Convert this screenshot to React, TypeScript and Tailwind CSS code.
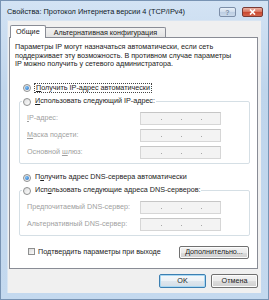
import React from "react";

function Radio({ checked }: { checked?: boolean }) {
  return (
    <span className="w-[8px] h-[8px] shrink-0 rounded-full border border-[#8e8f8f] bg-[linear-gradient(135deg,#dcdcdc,#ffffff)] flex items-center justify-center">
      {checked && <span className="w-[4px] h-[4px] rounded-full bg-[radial-gradient(circle_at_35%_35%,#7ec3f5,#1f66c2)]" />}
    </span>
  );
}

function IpBox() {
  return (
    <div className="w-[81px] h-[13px] border border-[#d6d6d6] border-t-[#c6c6c6] bg-[#f3f3f3] flex items-center pl-[20px] gap-[19px]">
      <span className="w-[1px] h-[1px] mt-[3px] bg-[#a8a8a8]" />
      <span className="w-[1px] h-[1px] mt-[3px] bg-[#a8a8a8]" />
      <span className="w-[1px] h-[1px] mt-[3px] bg-[#a8a8a8]" />
    </div>
  );
}

function FieldRow({ label }: { label: React.ReactNode }) {
  return (
    <div className="h-[13px] flex items-center pl-[7px]">
      <span className="w-[113px] text-[#a0a0a0] whitespace-nowrap">{label}</span>
      <IpBox />
    </div>
  );
}

const U = ({ c }: { c: string }) => <span className="underline underline-offset-[1px]">{c}</span>;

function WinButton({ children, def, w }: { children: React.ReactNode; def?: boolean; w: string }) {
  return (
    <div
      className={
        def
          ? "h-[14px] w-[47px] rounded-[2px] border border-[#3c7fb1] bg-[linear-gradient(#f4f8fb_0%,#edf2f6_50%,#dfe7ee_51%,#d3dde6_100%)] shadow-[inset_0_0_0_1px_#a9d8f3] flex items-center justify-center"
          : w === "wide"
          ? "h-[13px] w-[70px] rounded-[2px] border border-[#707070] bg-[linear-gradient(#f2f2f2_0%,#ebebeb_50%,#dddddd_51%,#cfcfcf_100%)] shadow-[inset_0_0_0_1px_#fcfcfc] flex items-center justify-center"
          : "h-[14px] w-[47px] rounded-[2px] border border-[#707070] bg-[linear-gradient(#f2f2f2_0%,#ebebeb_50%,#dddddd_51%,#cfcfcf_100%)] shadow-[inset_0_0_0_1px_#fcfcfc] flex items-center justify-center"
      }
    >
      {children}
    </div>
  );
}

export default function App() {
  return (
    <div className="w-[269px] h-[300px] bg-[linear-gradient(#d3e3f4,#bfd5ec_30%,#c4d9ef)] border border-[#7893b3] flex flex-col font-['Liberation_Sans',Arial,sans-serif] text-[#222222] text-[7.2px] overflow-hidden">
      {/* title bar */}
      <div className="h-[19px] flex items-center pt-[3px] pl-[6px] pr-[5px]">
        <span className="flex-1 text-[7.4px] text-[#101a28] whitespace-nowrap">Свойства: Протокол Интернета версии 4 (TCP/IPv4)</span>
        <div className="flex items-center gap-[6px]">
          <div className="w-[17px] h-[10px] rounded-[2px] border border-[#7c8ea8] bg-[linear-gradient(#e9f0f8,#cfdcec_50%,#bccde2_51%,#cad9ea)] flex items-center justify-center text-[7px] font-bold text-[#7b8ea6] leading-none">?</div>
          <div className="w-[21px] h-[10px] rounded-[2px] border border-[#7a3a34] bg-[linear-gradient(#eab2a4,#d97863_45%,#c8452d_50%,#d4654c)] flex items-center justify-center">
            <svg width="7" height="6" viewBox="0 0 7 6">
              <path d="M1 0.5 L6 5.5 M6 0.5 L1 5.5" stroke="#ffffff" strokeWidth="1.6" />
            </svg>
          </div>
        </div>
      </div>

      {/* client */}
      <div className="flex-1 ml-[6px] mr-[7px] mb-[6px] bg-[#f0f0f0] border-l border-t border-[#d9e5f2] flex flex-col pl-[1px] pr-[3px] pt-[4px]">
        {/* tabs */}
        <div className="h-[12px] flex items-end pl-[1px]">
          <div className="relative z-10 h-[13px] -mb-[1px] px-[5px] bg-white border border-b-0 border-[#898c95] rounded-t-[2px] flex items-center">Общие</div>
          <div className="h-[10px] px-[8px] border border-l-0 border-b-0 border-[#898c95] rounded-tr-[2px] bg-[linear-gradient(#f2f2f2,#e3e3e3)] flex items-center pt-[1px]">Альтернативная конфигурация</div>
        </div>

        {/* panel */}
        <div className="h-[232px] bg-white border border-[#898c95] flex flex-col">
          <p className="pt-[5px] pl-[5px] leading-[8.5px] whitespace-nowrap">
            Параметры IP могут назначаться автоматически, если сеть
            <br />
            поддерживает эту возможность. В противном случае параметры
            <br />
            IP можно получить у сетевого администратора.
          </p>

          <div className="mt-[14px] h-[10px] flex items-center pl-[13px] gap-[3px]">
            <Radio checked />
            <span className="border border-dotted border-[#444] px-[1px] leading-[8px] whitespace-nowrap">
              <U c="П" />олучить IP-адрес автоматически
            </span>
          </div>

          <fieldset className="mt-[4px] ml-[9px] mr-[7px] border border-[#d5dfe5] rounded-[2px] p-0 min-w-0">
            <legend className="ml-[2px] px-[1px]">
              <span className="h-[10px] flex items-center gap-[4px] whitespace-nowrap">
                <Radio />
                <span>
                  <U c="И" />спользовать следующий IP-адрес:
                </span>
              </span>
            </legend>
            <div className="pt-[5px] pb-[4px] flex flex-col gap-[4px]">
              <FieldRow label={<><U c="I" />P-адрес:</>} />
              <FieldRow label={<><U c="М" />аска подсети:</>} />
              <FieldRow label={<>Основной <U c="ш" />люз:</>} />
            </div>
          </fieldset>

          <div className="mt-[9px] h-[10px] flex items-center pl-[13px] gap-[4px]">
            <Radio checked />
            <span className="whitespace-nowrap">
              П<U c="о" />лучить адрес DNS-сервера автоматически
            </span>
          </div>

          <fieldset className="mt-[3px] ml-[9px] mr-[7px] border border-[#d5dfe5] rounded-[2px] p-0 min-w-0">
            <legend className="ml-[2px] px-[1px]">
              <span className="h-[10px] flex items-center gap-[4px] whitespace-nowrap">
                <Radio />
                <span>
                  Исп<U c="о" />льзовать следующие адреса DNS-серверов:
                </span>
              </span>
            </legend>
            <div className="pt-[5px] pb-[4px] flex flex-col gap-[4px]">
              <FieldRow label={<>Предпочитаемый DNS-сервер:</>} />
              <FieldRow label={<>Альтернативный DNS-сервер:</>} />
            </div>
          </fieldset>

          <div className="mt-[10px] h-[13px] flex items-center justify-between pl-[18px] pr-[8px]">
            <div className="flex items-center gap-[3px]">
              <span className="w-[7px] h-[7px] border border-[#8e8f8f] bg-[linear-gradient(135deg,#dcdcdc,#fbfbfb)]" />
              <span className="whitespace-nowrap">Подтвердить параметры при выходе</span>
            </div>
            <WinButton w="wide">
              <span>
                <U c="Д" />ополнительно...
              </span>
            </WinButton>
          </div>
        </div>

        {/* bottom buttons */}
        <div className="mt-[5px] flex justify-end gap-[5px]">
          <WinButton def w="n">OK</WinButton>
          <WinButton w="n">Отмена</WinButton>
        </div>
      </div>
    </div>
  );
}
